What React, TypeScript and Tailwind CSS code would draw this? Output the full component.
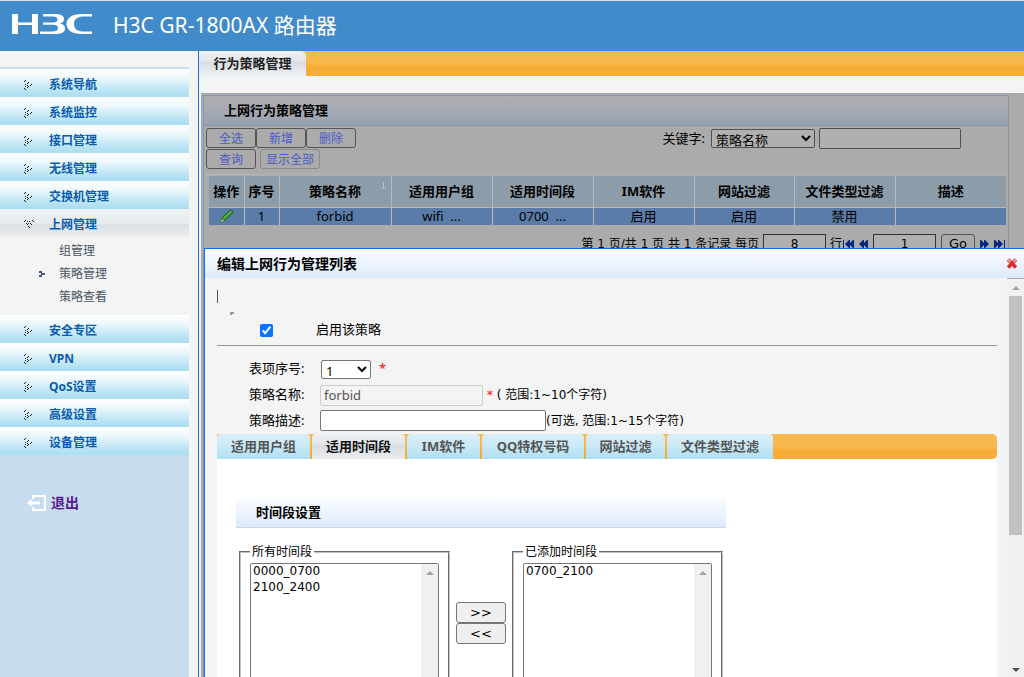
import { useState } from 'react';

const FONT = "font-['Noto_Sans','Noto_Sans_CJK_SC',sans-serif]";
const FONT_WIDE = "font-['DejaVu_Sans','Noto_Sans_CJK_SC',sans-serif]";

const topMenu = ['系统导航', '系统监控', '接口管理', '无线管理', '交换机管理'];
const subMenu = ['组管理', '策略管理', '策略查看'];
const bottomMenu = ['安全专区', 'VPN', 'QoS设置', '高级设置', '设备管理'];

const columns = [
    { title: '操作', width: 'w-[35px]', value: '' },
    { title: '序号', width: 'w-[35px]', value: '1' },
    { title: '策略名称', width: 'w-[112px]', value: 'forbid' },
    { title: '适用用户组', width: 'w-[101px]', value: 'wifi  ...' },
    { title: '适用时间段', width: 'w-[101px]', value: '0700  ...' },
    { title: 'IM软件', width: 'w-[101px]', value: '启用' },
    { title: '网站过滤', width: 'w-[100px]', value: '启用' },
    { title: '文件类型过滤', width: 'w-[101px]', value: '禁用' },
    { title: '描述', width: '', value: '' },
];

const tabs = [
    { label: '适用用户组', width: 'w-[93px]' },
    { label: '适用时间段', width: 'w-[93px]' },
    { label: 'IM软件', width: 'w-[73px]' },
    { label: 'QQ特权号码', width: 'w-[102px]' },
    { label: '网站过滤', width: 'w-[79px]' },
    { label: '文件类型过滤', width: 'w-[106px]' },
];

const Dots = ({ open = false }: { open?: boolean }) => (
    <svg
        width="10"
        height="10"
        viewBox="0 0 10 10"
        fill="#14143c"
        shapeRendering="crispEdges"
        className={open ? 'rotate-90' : ''}
    >
        <path d="M0 1h1v-1h1v1h-1v1h-1zM3 3h1v-1h1v1h-1v1h-1zM1 4h1v1h-1zM6 5h1v-1h1v1h-1v1h-1zM3 5h1v1h-1zM4 6h1v1h-1zM1 6h1v1h-1zM3 7h1v1h-1zM0 8h1v1h-1zM1 9h1v1h-1z" />
    </svg>
);

const MenuLink = ({ label, open = false }: { label: string; open?: boolean }) => (
    <a
        href="#"
        className={`flex h-7 items-center pl-6 pt-[3px] text-xs font-bold text-[#0a5cb0] ${
            open
                ? 'bg-[linear-gradient(#f0f3f5,#e6eaed_54%,#d9dfe4_56%,#eceef0)]'
                : 'bg-[linear-gradient(#ffffff,#eef8fc_30%,#b8e3f3_80%,#a9ddf0)]'
        }`}
    >
        <span className="w-[25px]">
            <Dots open={open} />
        </span>
        {label}
    </a>
);

const Sidebar = () => (
    <nav className="flex w-[189px] shrink-0 flex-col bg-[#c8dcf0]">
        <div className="h-[18px] border-b-2 border-[#c8dcf0] bg-[#f4f4f4]" />
        {topMenu.map((item) => (
            <MenuLink key={item} label={item} />
        ))}
        <MenuLink label="上网管理" open />
        <ul className="h-[78px] bg-[#f4f4f4] pt-[2px] text-xs text-[#4a5566]">
            {subMenu.map((item, i) => (
                <li key={item}>
                    <a href="#" className="flex h-[23px] items-center pl-[39px]">
                        <span className="w-5">
                            {i === 1 && (
                                <svg width="6" height="6" viewBox="0 0 6 6" fill="#42546b" shapeRendering="crispEdges">
                                    <path d="M0 0h3v2h-3zM2 2h4v2h-4zM0 4h3v2h-3z" />
                                </svg>
                            )}
                        </span>
                        {item}
                    </a>
                </li>
            ))}
        </ul>
        {bottomMenu.map((item) => (
            <MenuLink key={item} label={item} />
        ))}
        <a href="#" className="mt-[38px] flex items-center gap-[5px] pl-[27px] text-sm font-bold text-[#551a8b]">
            <svg width="19" height="16" viewBox="0 0 19 16" fill="none" stroke="#fff" strokeWidth="2">
                <path d="M6 4V1h12v14H6v-3" />
                <path d="M4 8h9" strokeWidth="3" />
                <path d="M0 8l4.500-4v8z" fill="#fff" stroke="none" />
            </svg>
            退出
        </a>
    </nav>
);

const toolButton = 'h-5 rounded-[3px] border pt-px text-xs text-[#4a5bc4]';

const PageArrow = ({ label, back = false, end = false }: { label: string; back?: boolean; end?: boolean }) => (
    <button aria-label={label} className={back ? 'rotate-180' : ''}>
        <svg width={end ? 12 : 9} height="8" viewBox={end ? '0 0 12 8' : '0 0 9 8'} fill="#06277c">
            <path d="M0 0h1l4 4-4 4H0zM4 0h1l4 4-4 4H4z" />
            {end && <path d="M10 0h1v8h-1z" />}
        </svg>
    </button>
);

const PolicyPanel = () => (
    <section className="ml-[2px] mt-[17px] flex-1 bg-[#ababab] pl-[2px] pr-[15px] pt-[2px]">
        <div className="h-full border border-[#8797a8]">
            <h2 className="flex h-[30px] items-center border-b border-[#8797a8] bg-[linear-gradient(#aeaeb1,#a5a9b2_50%,#98a2b0)] pl-5 text-[13px] font-bold text-black">
                上网行为策略管理
            </h2>
            <div className="flex items-start pl-[2px] pt-[2px]">
                <div className="flex-1">
                    <div className="flex">
                        <button className={`${toolButton} w-[50px] border-[#555]`}>全选</button>
                        <button className={`${toolButton} w-[50px] border-[#555]`}>新增</button>
                        <button className={`${toolButton} w-[50px] border-[#555]`}>删除</button>
                    </div>
                    <div className="mt-px flex gap-1">
                        <button className={`${toolButton} w-[50px] border-[#555]`}>查询</button>
                        <button className={`${toolButton} w-[60px] border-[#8a8a8a]`}>显示全部</button>
                    </div>
                </div>
                <div className="flex items-center gap-1 pr-[47px] text-[13px]">
                    <label htmlFor="field" className="pr-[2px]">
                        关键字:
                    </label>
                    <select
                        id="field"
                        className="h-[19px] w-[104px] rounded-[2px] border border-[#505050] bg-[#b0b0b0] leading-4"
                    >
                        <option>策略名称</option>
                    </select>
                    <input
                        aria-label="关键字"
                        className="h-[21px] w-[142px] rounded-[2px] border border-[#505050] bg-[#b0b0b0] px-1"
                    />
                </div>
            </div>
            <div className="mt-1 border-t-[3px] border-[#b0b0b0] pl-[5px] pr-[2px]">
                <table className="w-full table-fixed border-collapse text-[13px]">
                    <thead>
                        <tr className="h-[31px] bg-[#8c9ca8]">
                            {columns.map((col) => (
                                <th
                                    key={col.title}
                                    className={`${col.width} relative whitespace-nowrap border-b border-r border-[#b8b8b8] p-0 last:border-r-0`}
                                >
                                    {col.title}
                                    {col.title === '策略名称' && (
                                        <svg
                                            className="absolute right-1 top-1.5"
                                            width="7"
                                            height="8"
                                            viewBox="0 0 7 8"
                                            fill="none"
                                            stroke="#b8c0c8"
                                        >
                                            <path d="M3.500 0v7M1 4.500l2.500 2.500 2.500-2.500" />
                                        </svg>
                                    )}
                                </th>
                            ))}
                        </tr>
                    </thead>
                    <tbody>
                        <tr className="h-[17px] bg-[#5a7ca8] leading-[17px]">
                            {columns.map((col, i) => (
                                <td
                                    key={col.title}
                                    className="whitespace-pre border-r border-[#b8b8b8] p-0 text-center last:border-r-0"
                                >
                                    {i === 0 ? (
                                        <button aria-label="编辑" className="block w-full pl-[11px]">
                                            <svg width="14" height="14" viewBox="0 0 14 14">
                                                <path
                                                    d="M1 13l1.500-4.500 7.500-7 1.500-.500 1.500 1.500-.500 1.500-7.500 7.500z"
                                                    fill="#3f9a2e"
                                                    stroke="#215c20"
                                                />
                                                <path d="M4 9l7-6.500" stroke="#86cf5a" />
                                                <path d="M1 13l1-3 2 2z" fill="#d8c890" />
                                            </svg>
                                        </button>
                                    ) : (
                                        col.value
                                    )}
                                </td>
                            ))}
                        </tr>
                    </tbody>
                </table>
            </div>
            <div className={`mt-[9px] flex items-center justify-end whitespace-pre pr-[2px] text-xs ${FONT_WIDE}`}>
                <label htmlFor="page-size">第 1 页/共 1 页 共 1 条记录 每页</label>
                <input
                    id="page-size"
                    defaultValue="8"
                    className="ml-1 mr-1 h-[21px] w-[63px] border border-[#333] bg-[#b0b0b0] text-center"
                />
                行
                <div className="flex items-center gap-[5px]">
                    <PageArrow label="首页" back end />
                    <PageArrow label="上一页" back />
                    <input
                        aria-label="页码"
                        defaultValue="1"
                        className="h-[21px] w-[63px] border border-[#333] bg-[#b0b0b0] text-center"
                    />
                    <button className="h-[21px] w-[34px] rounded-[3px] border border-[#555] text-[13px]">Go</button>
                    <PageArrow label="下一页" />
                    <PageArrow label="末页" end />
                </div>
            </div>
        </div>
    </section>
);

const ListBox = ({ legend, items }: { legend: string; items: string[] }) => (
    <fieldset className="h-[160px] w-[211px] border-2 border-[#c0c0c0] px-[9px] [border-style:groove]">
        <legend className="px-[2px] text-xs leading-4">{legend}</legend>
        <div className="mt-[3px] flex h-[150px] rounded-[2px] border border-[#767676] bg-white">
            <select
                multiple
                aria-label={legend}
                className={`min-w-0 flex-1 overflow-hidden text-xs ${FONT_WIDE}`}
            >
                {items.map((item) => (
                    <option key={item} className="h-4 min-h-0 px-[2px] py-0 leading-4">
                        {item}
                    </option>
                ))}
            </select>
            <div className="flex w-[17px] justify-center bg-[#f0f0f0] pt-[7px]">
                <svg width="8" height="4" viewBox="0 0 8 4" fill="#a3a3a3">
                    <path d="M4 0l4 4H0z" />
                </svg>
            </div>
        </div>
    </fieldset>
);

const moveButton = 'h-[21px] w-[50px] rounded-[3px] border border-[#767676] bg-[#efefef] text-[13px]';
const formRow = 'flex items-center pl-8';
const formLabel = 'w-[71px] text-[13px]';

const EditDialog = () => {
    const [activeTab, setActiveTab] = useState(1);
    const [enabled, setEnabled] = useState(true);

    return (
        <div
            role="dialog"
            aria-labelledby="dialog-title"
            className="absolute bottom-0 left-[5px] right-0 top-[197px] flex flex-col border-l border-t border-[#0f72e0] bg-[#f4f4f4]"
        >
            <div className="flex h-[29px] shrink-0 items-center justify-between bg-[linear-gradient(#fafcff,#edf4fe_50%,#dceafb)] pl-3 pr-[6px]">
                <h2 id="dialog-title" className="text-sm font-bold text-black">
                    编辑上网行为管理列表
                </h2>
                <button aria-label="关闭">
                    <svg width="12" height="11" viewBox="0 0 12 11">
                        <path d="M2 1.500l8 8M10 1.500l-8 8" stroke="#d92b2b" strokeWidth="3.500" />
                        <path d="M2 1.500l2.500 2.500M10 1.500l-2.500 2.500" stroke="#f0a0a0" strokeWidth="2" />
                    </svg>
                </button>
            </div>

            <div className="flex min-h-0 flex-1">
                <div className="flex min-w-0 flex-1 flex-col overflow-hidden pl-3 pr-[10px]">
                    <div className="mt-3 h-[13px] w-px shrink-0 bg-[#555]" />
                    <div className="ml-[13px] mt-[9px] h-[3px] w-1 shrink-0 border-l-2 border-t-2 border-[#999]" />
                    <div className="flex h-[30px] shrink-0 items-center pl-[43px] text-[13px]">
                        <input
                            id="enabled"
                            type="checkbox"
                            checked={enabled}
                            onChange={() => setEnabled(!enabled)}
                            className="h-[13px] w-[13px] accent-[#0075ff]"
                        />
                        <label htmlFor="enabled" className="pl-[43px]">
                            启用该策略
                        </label>
                    </div>
                    <hr className="border-[#999]" />

                    <form className="flex shrink-0 flex-col pb-px pt-[10px]">
                        <div className={`${formRow} h-[26px]`}>
                            <label htmlFor="index" className={formLabel}>
                                表项序号:
                            </label>
                            <select id="index" className="ml-px h-[19px] w-[50px] rounded-[2px] border border-[#767676] bg-white text-[13px] leading-4">
                                <option>1</option>
                            </select>
                            <span className="pl-2 text-[13px] text-[#f00]">*</span>
                        </div>
                        <div className={`${formRow} h-[26px]`}>
                            <label htmlFor="name" className={formLabel}>
                                策略名称:
                            </label>
                            <input
                                id="name"
                                disabled
                                defaultValue="forbid"
                                className="h-[21px] w-[163px] rounded-[2px] border border-[#ccc] px-[3px] text-[13px] text-[#545454]"
                            />
                            <span className={`whitespace-pre pl-1 text-xs ${FONT_WIDE}`}>
                                <span className="text-[#f00]">*</span> ( 范围:1~10个字符)
                            </span>
                        </div>
                        <div className={`${formRow} h-[25px]`}>
                            <label htmlFor="desc" className={formLabel}>
                                策略描述:
                            </label>
                            <input
                                id="desc"
                                className="h-[21px] w-[226px] rounded-[2px] border border-[#767676] bg-white px-[3px] text-[13px]"
                            />
                            <span className={`text-xs ${FONT_WIDE}`}>(可选, 范围:1~15个字符)</span>
                        </div>
                    </form>

                    <div
                        role="tablist"
                        className="flex h-[25px] shrink-0 rounded-r-[5px] bg-[linear-gradient(#f8b84e_55%,#f7ad35_65%)]"
                    >
                        {tabs.map((tab, i) => (
                            <button
                                key={tab.label}
                                role="tab"
                                aria-selected={i === activeTab}
                                onClick={() => setActiveTab(i)}
                                className={`${tab.width} mr-[2px] h-[26px] whitespace-nowrap rounded-t-[4px] text-[13px] font-bold ${
                                    i === activeTab
                                        ? 'bg-[linear-gradient(#eef1f3,#e2e6ea_40%,#d8dde2_42%,#e9edf0)] text-[#111]'
                                        : 'bg-[linear-gradient(#dceffa,#c8e8f5_50%,#addff2)] text-[#555]'
                                }`}
                            >
                                {tab.label}
                            </button>
                        ))}
                    </div>

                    <div className="min-h-0 flex-1 bg-white pl-[19px] pt-[39px]">
                        <h3 className="flex h-[30px] w-[490px] items-center border-b border-[#c5d9ee] bg-[linear-gradient(#fafcff,#edf4fe_50%,#dceafb)] pl-5 text-[13px] font-bold text-black">
                            时间段设置
                        </h3>
                        <div className="flex gap-[6px] pl-[3px] pt-4">
                            <ListBox legend="所有时间段" items={['0000_0700', '2100_2400']} />
                            <div className={`flex flex-col pt-[58px] ${FONT_WIDE}`}>
                                <button className={moveButton}>&gt;&gt;</button>
                                <button className={moveButton}>&lt;&lt;</button>
                            </div>
                            <ListBox legend="已添加时间段" items={['0700_2100']} />
                        </div>
                    </div>
                </div>

                {/* Scrollbar */}
                <div className="flex w-[17px] shrink-0 flex-col items-center border-t border-[#aaa] bg-[#f0f0f0] pb-[5px] pt-[7px]">
                    <svg width="8" height="4" viewBox="0 0 8 4" fill="#a3a3a3">
                        <path d="M4 0l4 4H0z" />
                    </svg>
                    <div className="mt-[6px] h-[62%] w-[13px] bg-[#c1c1c1]" />
                    <svg className="mt-auto" width="8" height="4" viewBox="0 0 8 4" fill="#505050">
                        <path d="M4 4l4-4H0z" />
                    </svg>
                </div>
            </div>
        </div>
    );
};

export default function App() {
    return (
        <div className={`flex h-screen flex-col overflow-hidden bg-[#f4f4f4] text-black ${FONT}`}>
            <header className="flex h-[51px] shrink-0 items-center border-t border-[#d8dee6] bg-[#428bca] pl-3 text-white">
                <svg width="81" height="20" viewBox="0 0 81 20" fill="#fff" role="img" aria-label="H3C" className="mb-1">
                    <path d="M0 0h6v8.500h14V0h6v20h-6v-9H6v9H0z" />
                    <path d="M31 0h11c7 0 10 1.500 10 5 0 2.500-1.500 4-4.500 4.500 3.500.500 5.500 2 5.500 5 0 4-3.500 5.500-10 5.500H28v-2.500h12c4 0 6-1 6-3.500s-2-3.200-5-3.200H31V8.500h10c3 0 4.500-1 4.500-3s-1.500-3-4.500-3H31z" />
                    <path d="M80 0v2.500h-8c-6.500 0-10 2.500-10 7.500s3.500 7.500 10 7.500h8V20H70c-10 0-15.500-4-15.500-10S60 0 70 0z" />
                </svg>
                <h1 className="pl-5 text-[21px]">H3C GR-1800AX 路由器</h1>
            </header>

            <div className="flex min-h-0 flex-1">
                <Sidebar />
                <main className="relative ml-[9px] flex min-w-0 flex-1 flex-col border-l border-[#0f72e0]">
                    <div className="flex h-[25px] shrink-0 bg-[linear-gradient(#f8b84e_45%,#f7ad35_65%)]">
                        <h2 className="flex h-[26px] w-[107px] items-center justify-center rounded-tr-[5px] bg-[linear-gradient(#eef1f3,#e2e6ea_40%,#d8dde2_42%,#eef1f3)] text-[13px] font-bold text-[#222]">
                            行为策略管理
                        </h2>
                    </div>
                    <PolicyPanel />
                    <EditDialog />
                </main>
            </div>
        </div>
    );
}
